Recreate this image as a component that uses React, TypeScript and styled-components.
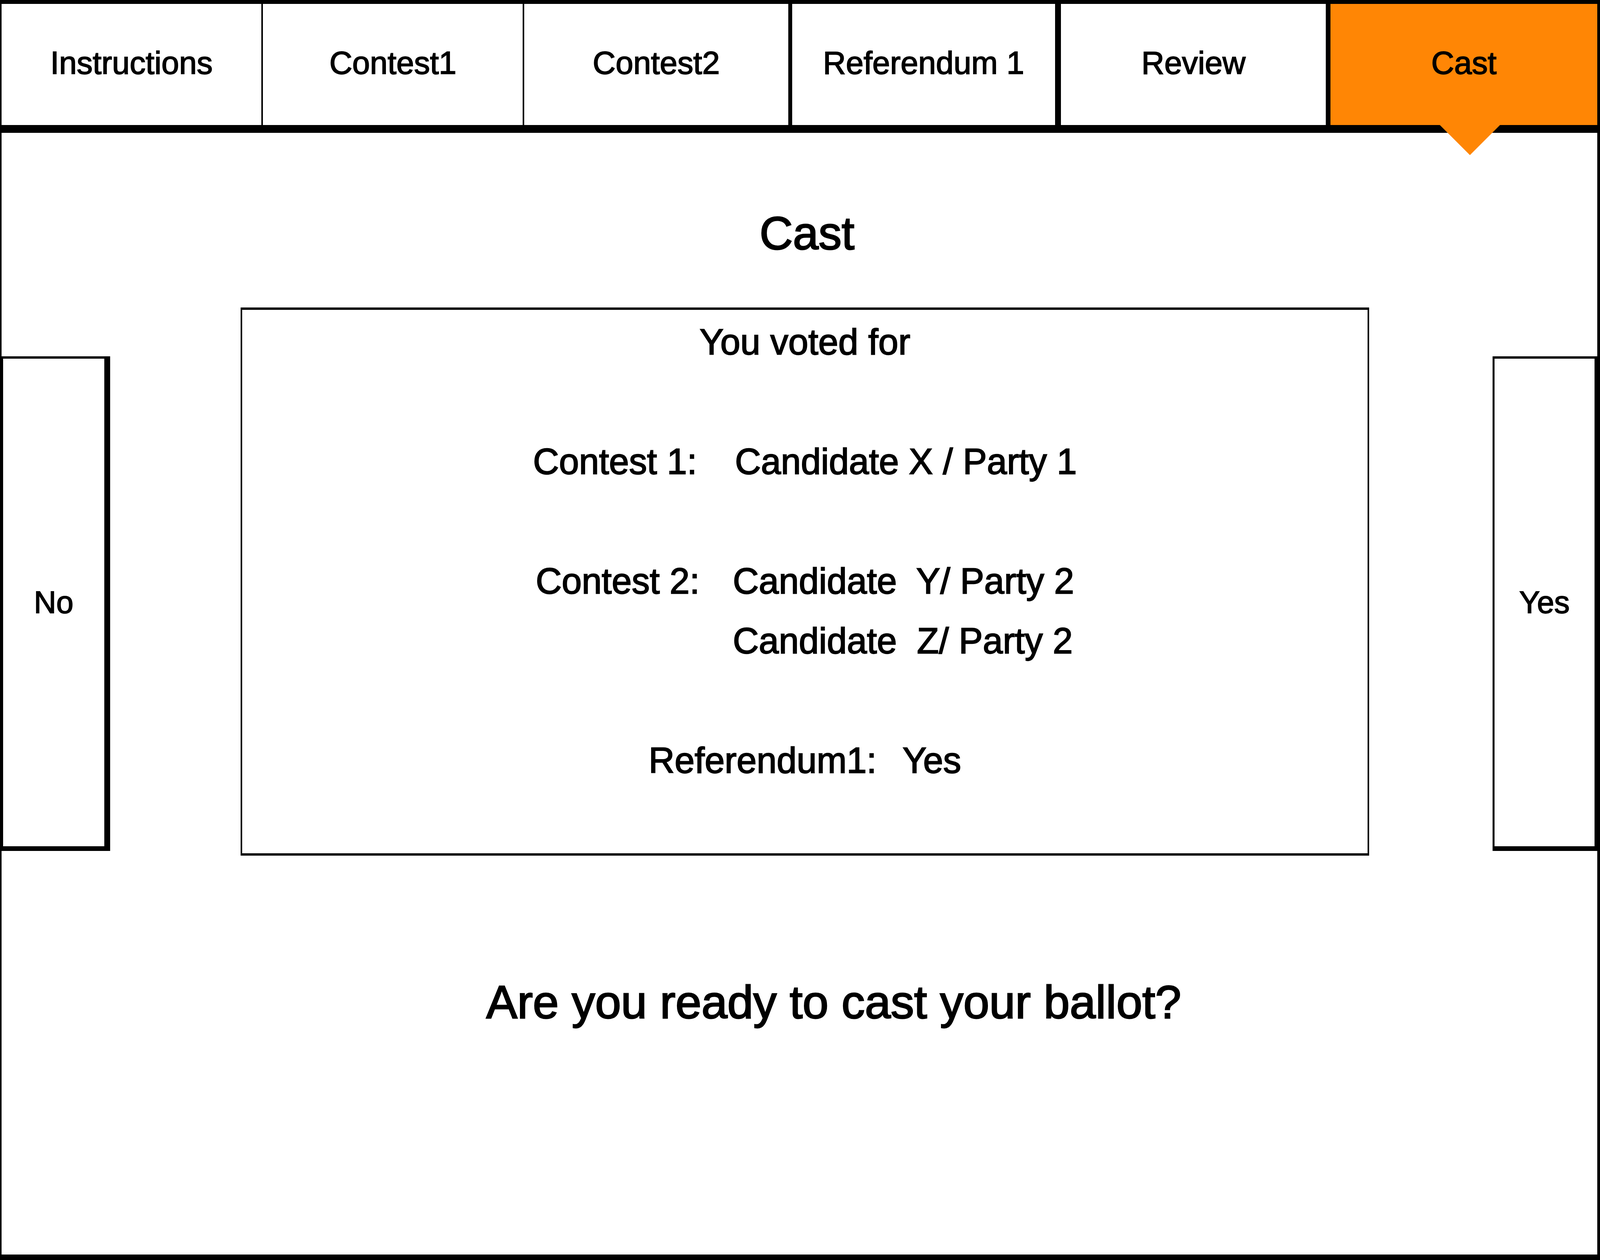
import React from "react";
import styled, { createGlobalStyle } from "styled-components";

// measurements come from the 5692x3225 mockup; scale them to the viewport
const x = (n: number) => `calc(${n} * var(--ux))`;
const y = (n: number) => `calc(${n} * var(--uy))`;

const GlobalStyle = createGlobalStyle`
	:root {
		--ux: calc(100vw / 5692);
		--uy: calc(100vh / 3225);
	}
	html, body {
		margin: 0;
		padding: 0;
		background: #fff;
		overflow: hidden;
	}
	body {
		font-family: "Liberation Sans", Arial, sans-serif;
		color: #000;
	}
`;

const ORANGE = "#ff8605";

const tabs = [
	{ label: "Instructions", divider: 6 },
	{ label: "Contest1", divider: 6 },
	{ label: "Contest2", divider: 15 },
	{ label: "Referendum 1", divider: 22 },
	{ label: "Review", divider: 18 },
	{ label: "Cast", divider: 0, active: true },
];

const votes = [
	{ label: "Contest 1:", gap: 135, choices: ["Candidate X / Party 1"] },
	{
		label: "Contest 2:",
		gap: 118,
		choices: ["Candidate  Y/ Party 2", "Candidate  Z/ Party 2"],
	},
	{ label: "Referendum1:", gap: 92, choices: ["Yes"] },
];

export default function App() {
	return (
		<>
			<GlobalStyle />
			<Frame>
				<TabBar>
					{tabs.map((tab) => (
						<Tab key={tab.label} $divider={tab.divider} $active={!!tab.active}>
							{tab.label}
							{tab.active && <Pointer />}
						</Tab>
					))}
				</TabBar>

				<Heading>Cast</Heading>

				<Middle>
					<SideButton $side="left">No</SideButton>
					<Summary>
						<SummaryTitle>You voted for</SummaryTitle>
						{votes.map((vote) => (
							<VoteRow key={vote.label} $gap={vote.gap}>
								<span>{vote.label}</span>
								<Choices>
									{vote.choices.map((c) => (
										<span key={c}>{c}</span>
									))}
								</Choices>
							</VoteRow>
						))}
					</Summary>
					<SideButton $side="right">Yes</SideButton>
				</Middle>

				<Question>Are you ready to cast your ballot?</Question>
			</Frame>
		</>
	);
}

const Frame = styled.div`
	box-sizing: border-box;
	width: 100vw;
	height: 100vh;
	border-style: solid;
	border-color: #000;
	border-width: ${y(10)} ${x(10)} ${y(14)} ${x(6)};
	background: #fff;
	display: flex;
	flex-direction: column;
`;

const TabBar = styled.div`
	display: grid;
	grid-template-columns: ${x(930)} ${x(930)} ${x(952)} ${x(957)} ${x(959)} 1fr;
	height: ${y(330)};
	box-sizing: border-box;
	border-bottom: ${y(20)} solid #000;
`;

const Tab = styled.div<{ $divider: number; $active: boolean }>`
	position: relative;
	box-sizing: border-box;
	display: flex;
	align-items: center;
	justify-content: center;
	padding-bottom: ${y(8)};
	border-right: ${(p) => x(p.$divider)} solid #000;
	background: ${(p) => (p.$active ? ORANGE : "#fff")};
	font-size: ${x(113)};
	-webkit-text-stroke: 0.025em #000;
	white-space: pre;
`;

const Pointer = styled.span`
	position: absolute;
	top: 100%;
	left: calc(50% - ${x(85)});
	width: 0;
	height: 0;
	border-left: ${x(108)} solid transparent;
	border-right: ${x(108)} solid transparent;
	border-top: ${y(77)} solid ${ORANGE};
	z-index: 2;
`;

const Heading = styled.h1`
	margin: ${y(175)} 0 0;
	padding-left: ${x(54)};
	font-size: ${x(164)};
	line-height: ${y(164)};
	font-weight: normal;
	-webkit-text-stroke: 0.025em #000;
	text-align: center;
`;

const Middle = styled.div`
	display: flex;
	align-items: flex-start;
	margin-top: ${y(108)};
`;

const SideButton = styled.div<{ $side: "left" | "right" }>`
	box-sizing: border-box;
	width: ${(p) => x(p.$side === "left" ? 386 : 373)};
	height: ${y(1266)};
	margin-top: ${y(125)};
	margin-left: ${(p) => (p.$side === "right" ? "auto" : "0")};
	display: flex;
	align-items: center;
	justify-content: center;
	border-style: solid;
	border-color: #000;
	border-width: ${(p) =>
		p.$side === "left"
			? `${y(6)} ${x(22)} ${y(12)} ${x(6)}`
			: `${y(6)} ${x(10)} ${y(12)} ${x(8)}`};
	font-size: ${x(110)};
	-webkit-text-stroke: 0.025em #000;
	background: #fff;
`;

const Summary = styled.div`
	box-sizing: border-box;
	width: ${x(4014)};
	height: ${y(1403)};
	margin-left: ${x(465)};
	border-style: solid;
	border-color: #000;
	border-width: ${y(6)} ${x(6)};
	padding-top: ${y(6)};
	display: flex;
	flex-direction: column;
	align-items: center;
	font-size: ${x(128)};
	line-height: ${y(153)};
	-webkit-text-stroke: 0.025em #000;
	white-space: pre;
`;

const SummaryTitle = styled.div`
	text-align: center;
`;

const VoteRow = styled.div<{ $gap: number }>`
	display: inline-grid;
	grid-template-columns: auto auto;
	column-gap: ${(p) => x(p.$gap)};
	margin-top: ${y(153)};
`;

const Choices = styled.div`
	display: flex;
	flex-direction: column;
`;

const Question = styled.div`
	margin-top: ${y(292)};
	padding-left: ${x(244)};
	font-size: ${x(166)};
	line-height: ${y(166)};
	-webkit-text-stroke: 0.025em #000;
	text-align: center;
`;
